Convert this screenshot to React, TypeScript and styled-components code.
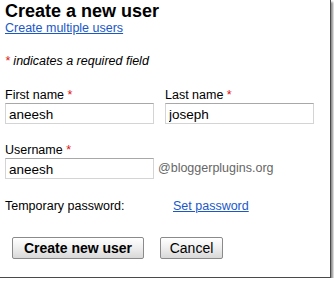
import React from "react";
import styled, { createGlobalStyle } from "styled-components";

const GlobalStyle = createGlobalStyle`
  body {
    margin: 0;
    background: #ffffff;
    font-family: "Liberation Sans", Arial, sans-serif;
  }
`;

const Frame = styled.div`
  box-sizing: border-box;
  width: 331px;
  height: 278px;
  padding: 1px 5px 0 5px;
  border-right: 1px solid #4a4a4a;
  border-bottom: 1px solid #4a4a4a;
  box-shadow: 2px 2px 2px rgba(0, 0, 0, 0.45);
  font-size: 12.5px;
  color: #000;
`;

const Title = styled.h1`
  margin: 0;
  font-size: 18px;
  line-height: 20px;
  font-weight: bold;
`;

const Link = styled.a`
  color: #1a58c8;
  text-decoration: underline;
  font-size: 12.5px;
  line-height: 15px;
  cursor: pointer;
`;

const Note = styled.div`
  margin-top: 18px;
  font-style: italic;
  line-height: 15px;
`;

const Star = styled.span`
  color: #dd1111;
`;

const Row = styled.div`
  display: flex;
  align-items: flex-end;
  gap: 11px;
  margin-top: 19px;
`;

const Field = styled.label`
  display: flex;
  flex-direction: column;
  line-height: 15px;
`;

const Input = styled.input`
  box-sizing: border-box;
  width: 149px;
  height: 21px;
  margin: 0;
  padding: 1px 3px 0;
  border: 1px solid #d4d4d4;
  border-top-color: #a8a8a8;
  font-family: "Liberation Sans", Arial, sans-serif;
  font-size: 13.5px;
  color: #000;
  outline: none;
`;

const Domain = styled.span`
  color: #666;
  font-size: 12.5px;
  line-height: 21px;
  margin-left: -7px;
`;

const PasswordRow = styled.div`
  display: grid;
  grid-template-columns: 168px auto;
  margin-top: 20px;
  line-height: 15px;
`;

const Buttons = styled.div`
  display: flex;
  gap: 16px;
  margin-top: 23px;
  padding-left: 7px;
`;

const Button = styled.button<{ $primary?: boolean }>`
  box-sizing: border-box;
  width: ${(p) => (p.$primary ? 132 : 63)}px;
  height: 22px;
  padding: 0;
  border: 1px solid #8a8a8a;
  border-radius: 2px;
  background: linear-gradient(#ffffff, #f0f0f0 45%, #d8d8d8);
  font-family: "Liberation Sans", Arial, sans-serif;
  font-size: 14px;
  font-weight: ${(p) => (p.$primary ? "bold" : "normal")};
  color: #000;
  cursor: pointer;
`;

export default function App() {
  return (
    <>
      <GlobalStyle />
      <Frame>
        <Title>Create a new user</Title>
        <Link>Create multiple users</Link>
        <Note>
          <Star>*</Star> indicates a required field
        </Note>
        <Row>
          <Field>
            <span>
              First name <Star>*</Star>
            </span>
            <Input defaultValue="aneesh" />
          </Field>
          <Field>
            <span>
              Last name <Star>*</Star>
            </span>
            <Input defaultValue="joseph" />
          </Field>
        </Row>
        <Row>
          <Field>
            <span>
              Username <Star>*</Star>
            </span>
            <Input defaultValue="aneesh" />
          </Field>
          <Domain>@bloggerplugins.org</Domain>
        </Row>
        <PasswordRow>
          <span>Temporary password:</span>
          <Link>Set password</Link>
        </PasswordRow>
        <Buttons>
          <Button $primary>Create new user</Button>
          <Button>Cancel</Button>
        </Buttons>
      </Frame>
    </>
  );
}
